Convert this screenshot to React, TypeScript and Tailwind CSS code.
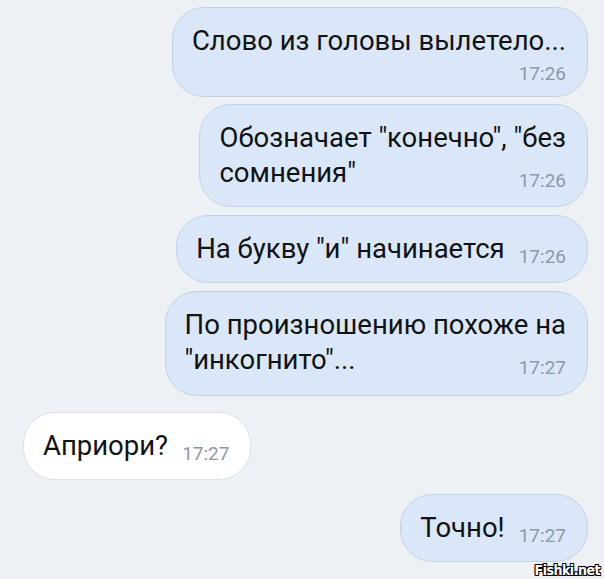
import React from "react";

type Msg = {
  lines: string[];
  time: string;
  out: boolean;
  timeOwnLine?: boolean;
  mt: string;
  pb?: string;
};

const msgs: Msg[] = [
  { lines: ["Слово из головы вылетело..."], time: "17:26", out: true, timeOwnLine: true, mt: "mt-[7px]" },
  { lines: ["Обозначает \"конечно\", \"без", "сомнения\""], time: "17:26", out: true, mt: "mt-[7px]" },
  { lines: ["На букву \"и\" начинается"], time: "17:26", out: true, mt: "mt-[8px]" },
  { lines: ["По произношению похоже на", "\"инкогнито\"..."], time: "17:27", out: true, mt: "mt-[8px]", pb: "pb-[18px]" },
  { lines: ["Априори?"], time: "17:27", out: false, mt: "mt-[16px]" },
  { lines: ["Точно!"], time: "17:27", out: true, mt: "mt-[14px]" },
];

function Bubble({ m }: { m: Msg }) {
  const last = m.lines[m.lines.length - 1];
  const rest = m.lines.slice(0, -1);
  const base =
    "flex flex-col rounded-[32px] border pl-[19px] pr-[21px] text-[27.5px] leading-[35px] text-[#121212] " +
    (m.out ? "bg-[#d9e7f8] border-[#c3d2e3]" : "bg-white border-[#dde2e8]");
  const time = (
    <span className="text-[19px] leading-[19px] text-[#8d98a5]">{m.time}</span>
  );
  if (m.timeOwnLine) {
    return (
      <div className={base + " pt-[15px] pb-[13px]"}>
        <span>{last}</span>
        <div className="flex justify-end mt-[6px]">{time}</div>
      </div>
    );
  }
  return (
    <div className={base + " pt-[15px] " + (m.pb ?? "pb-[16px]")}>
      {rest.map((l, i) => (
        <span key={i}>{l}</span>
      ))}
      <div className="flex items-end justify-between gap-[14px]">
        <span>{last}</span>
        <span className="mb-[-5px]">{time}</span>
      </div>
    </div>
  );
}

export default function App() {
  return (
    <div
      className="relative w-[604px] h-[579px] overflow-hidden bg-[#edf1f5] flex flex-col pl-[23px] pr-[16px]"
      style={{ fontFamily: "Roboto, 'Noto Sans', sans-serif" }}
    >
      {msgs.map((m, i) => (
        <div key={i} className={"flex " + m.mt + " " + (m.out ? "justify-end" : "justify-start")}>
          <Bubble m={m} />
        </div>
      ))}
      <div
        className="absolute right-[4px] bottom-[2px] text-[14px] font-bold leading-none text-white tracking-[-0.5px] [text-shadow:0_0_1px_#000,1px_1px_0_#000,-1px_-1px_0_#000,1px_-1px_0_#000,-1px_1px_0_#000]"
        style={{ fontFamily: "'DejaVu Sans Condensed', 'Liberation Sans Narrow', sans-serif" }}
      >
        Fishki.net
      </div>
    </div>
  );
}
